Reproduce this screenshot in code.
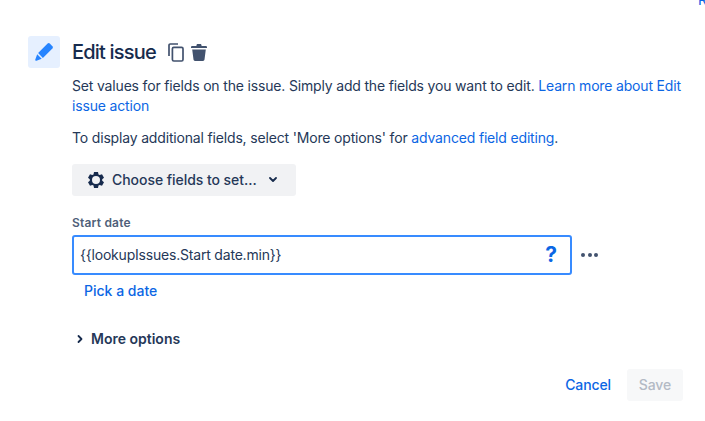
<script>
  let value = "{{lookupIssues.Start date.min}}";
</script>

<a class="cutoff" href="#top">R</a>

<main class="panel">
  <div class="tile">
    <svg width="20" height="20" viewBox="0 0 20 20">
      <path d="M13.6 1.6a1.6 1.6 0 0 1 2.2 0l2.6 2.6a1.6 1.6 0 0 1 0 2.2L8.9 15.9 4.1 11.1z" fill="#2684ff" />
      <path d="M3.2 12.3l4.5 4.500-5.200 1.900a.9.9 0 0 1-1.200-1.200z" fill="#2684ff" />
    </svg>
  </div>

  <div class="content">
    <header class="head">
      <h1>Edit issue</h1>
      <svg class="copy" width="16" height="19" viewBox="0 0 16 19">
        <path d="M1 13V2.200C1 1.500 1.500 1 2.200 1H10" fill="none" stroke="#42526e" stroke-width="1.700" />
        <rect x="4.400" y="4.400" width="10.600" height="13.600" rx="1.400" fill="none" stroke="#42526e" stroke-width="1.700" />
      </svg>
      <svg class="trash" width="16" height="17" viewBox="0 0 16 17">
        <path d="M5.500 1.200C5.600.5 6 0 6.800 0h2.400c.8 0 1.200.5 1.300 1.200l.1.800h4.200c.6 0 1.200.5 1.200 1.200V4H0v-.8C0 2.500.6 2 1.200 2h4.200z" fill="#42526e" />
        <path d="M1.200 5.500h13.600l-1.300 10c-.1.800-.7 1.400-1.500 1.400H4c-.8 0-1.400-.6-1.500-1.400z" fill="#42526e" />
      </svg>
    </header>

    <p class="intro">
      Set values for fields on the issue. Simply add the fields you want to edit.
      <a href="#learn">Learn more about Edit issue action</a>
    </p>
    <p class="extra">
      To display additional fields, select 'More options' for
      <a href="#advanced">advanced field editing</a>.
    </p>

    <button class="choose" type="button">
      <svg width="18" height="18" viewBox="0 0 18 18">
        <path fill-rule="evenodd" d="M7 0h4l.5 2.400 1.200.7L15 2.300l2 3.400-1.800 1.600v1.400L17 10.300l-2 3.400-2.300-.8-1.200.7L11 16H7l-.5-2.400-1.200-.7-2.300.8-2-3.400 1.800-1.600V7.300L1 5.700l2-3.400 2.300.8 1.200-.7zM9 4a4 4 0 1 0 0 8 4 4 0 0 0 0-8z" transform="translate(0 1)" fill="#172b4d" />
      </svg>
      <span>Choose fields to set...</span>
      <svg class="caret" width="8" height="6" viewBox="0 0 8 6">
        <path d="M1 1l3 3 3-3" fill="none" stroke="#172b4d" stroke-width="1.800" stroke-linecap="round" stroke-linejoin="round" />
      </svg>
    </button>

    <label class="label" for="start-date">Start date</label>
    <div class="field-row">
      <div class="field">
        <input id="start-date" type="text" bind:value />
        <span class="help">?</span>
      </div>
      <div class="dots"><i></i><i></i><i></i></div>
    </div>

    <a class="pick" href="#pick">Pick a date</a>

    <div class="more">
      <svg width="6" height="10" viewBox="0 0 6 10">
        <path d="M1.500 2 4.500 5 1.500 8" fill="none" stroke="#172b4d" stroke-width="1.800" stroke-linecap="round" stroke-linejoin="round" />
      </svg>
      <span>More options</span>
    </div>

    <footer class="actions">
      <button class="cancel" type="button">Cancel</button>
      <button class="save" type="button" disabled>Save</button>
    </footer>
  </div>
</main>

<style>
  :global(body) {
    margin: 0;
    background: #fff;
    font-family: Inter, "Noto Sans", sans-serif;
    color: #172b4d;
  }

  .cutoff {
    position: absolute;
    top: -10px;
    left: 698px;
    font-size: 14px;
    line-height: 20px;
    color: #0c66e4;
    text-decoration: none;
  }

  .panel {
    display: flex;
    gap: 12px;
    padding: 36px 0 0 28px;
    width: 655px;
    overflow: hidden;
  }

  .tile {
    display: flex;
    align-items: center;
    justify-content: center;
    flex: none;
    width: 32px;
    height: 32px;
    border-radius: 3px;
    background: #e6f0ff;
  }

  .content {
    flex: 1;
    min-width: 0;
  }

  .head {
    display: flex;
    align-items: center;
    height: 32px;
  }

  h1 {
    margin: 0;
    font-size: 20px;
    font-weight: 500;
    line-height: 32px;
    letter-spacing: -0.8px;
  }

  .copy {
    margin-left: 12px;
  }

  .trash {
    margin-left: 7px;
  }

  p {
    margin: 0;
    font-size: 14px;
    line-height: 20px;
    letter-spacing: -0.17px;
    color: #253858;
  }

  .intro {
    margin-top: 8px;
  }

  .extra {
    margin-top: 12px;
  }

  a {
    color: #0c66e4;
    text-decoration: none;
  }

  .choose {
    display: flex;
    align-items: center;
    width: 224px;
    height: 32px;
    margin-top: 16px;
    padding: 0 0 0 15px;
    border: none;
    border-radius: 3px;
    background: #f1f2f4;
    font: 500 14px/20px Inter, sans-serif;
    letter-spacing: -0.05px;
    color: #253858;
  }

  .choose span {
    margin-left: 7px;
  }

  .caret {
    margin-left: 12px;
  }

  .label {
    display: block;
    margin-top: 19px;
    font-size: 12px;
    font-weight: 600;
    line-height: 16px;
    letter-spacing: 0.2px;
    color: #505f79;
  }

  .field-row {
    display: flex;
    align-items: center;
    margin-top: 4px;
  }

  .field {
    display: flex;
    align-items: center;
    box-sizing: border-box;
    width: 500px;
    height: 40px;
    padding: 0 13px 0 6px;
    border: 2px solid #388bff;
    border-radius: 3px;
  }

  input {
    flex: 1;
    min-width: 0;
    padding: 0;
    border: none;
    outline: none;
    background: transparent;
    font: 400 14px/20px Inter, sans-serif;
    letter-spacing: -0.2px;
    color: #253858;
  }

  .help {
    font-size: 21px;
    font-weight: 700;
    line-height: 20px;
    color: #0c66e4;
  }

  .dots {
    display: flex;
    gap: 2.500px;
    margin-left: 9px;
  }

  .dots i {
    width: 4px;
    height: 4px;
    border-radius: 50%;
    background: #42526e;
  }

  .pick {
    display: block;
    margin: 6px 0 0 12px;
    font-size: 14px;
    font-weight: 500;
    line-height: 20px;
  }

  .more {
    display: flex;
    align-items: center;
    gap: 8px;
    margin: 28px 0 0 5px;
    font-size: 14px;
    font-weight: 600;
    line-height: 20px;
    color: #253858;
  }

  .actions {
    display: flex;
    align-items: center;
    justify-content: flex-end;
    gap: 16px;
    width: 611px;
    margin-top: 20px;
  }

  .actions button {
    border: none;
    background: none;
    padding: 0;
    font: 500 14px/20px Inter, sans-serif;
    letter-spacing: -0.1px;
  }

  .cancel {
    color: #0c66e4;
  }

  .actions .save {
    width: 56px;
    height: 32px;
    border-radius: 3px;
    background: #f7f8f9;
    color: #b3bac5;
  }
</style>
